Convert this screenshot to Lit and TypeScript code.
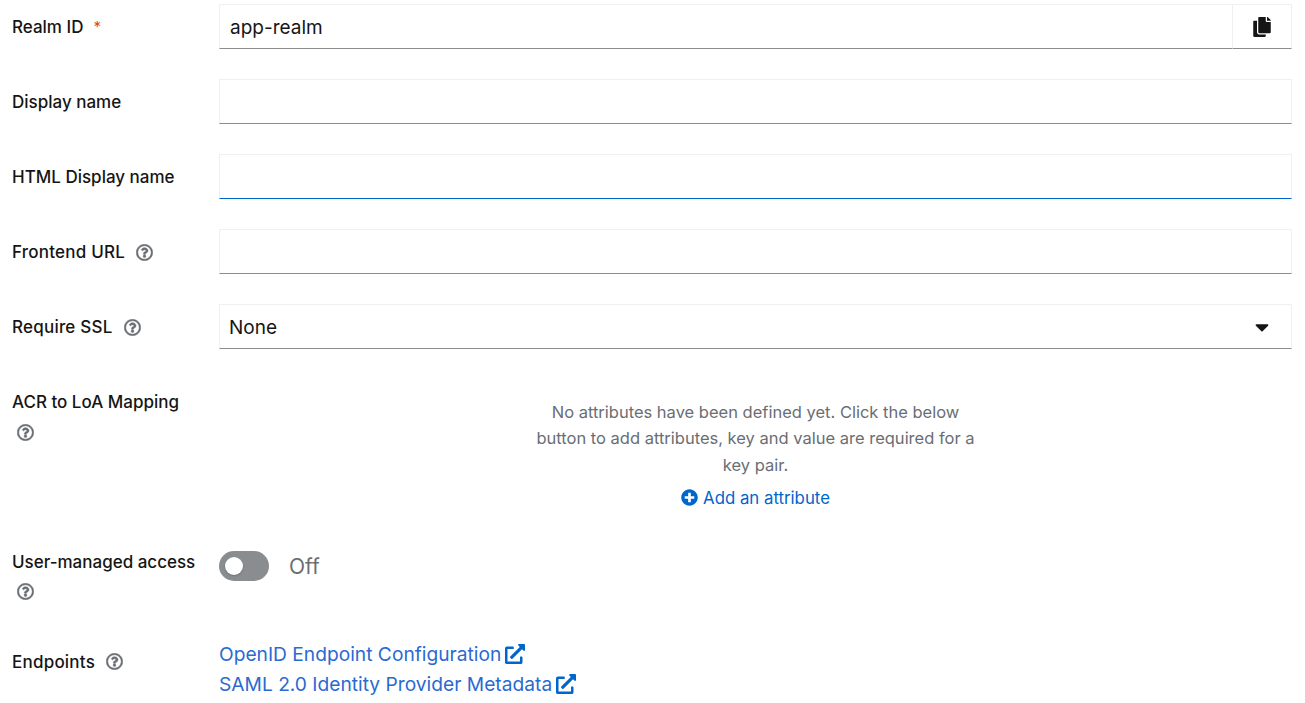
import { LitElement, html, css } from "lit";
import { customElement } from "lit/decorators.js";

const help = html`<svg class="help-icon" viewBox="0 0 512 512" aria-hidden="true"><path fill="currentColor" stroke="currentColor" stroke-width="14" d="M256 8C119.043 8 8 119.083 8 256c0 136.997 111.043 248 248 248s248-111.003 248-248C504 119.083 392.957 8 256 8zm0 448c-110.532 0-200-89.431-200-200 0-110.495 89.472-200 200-200 110.491 0 200 89.471 200 200 0 110.53-89.431 200-200 200zm107.244-255.2c0 67.052-72.421 68.084-72.421 92.863V300c0 6.627-5.373 12-12 12h-45.647c-6.627 0-12-5.373-12-12v-8.659c0-35.745 27.1-50.034 47.579-61.516 17.561-9.845 28.324-16.541 28.324-29.579 0-17.246-21.999-28.693-39.784-28.693-23.189 0-33.894 10.977-48.942 29.969-4.057 5.12-11.46 6.071-16.666 2.124l-27.824-21.098c-5.107-3.872-6.251-11.066-2.644-16.363C184.846 131.491 214.94 112 261.794 112c49.071 0 101.45 38.304 101.45 88.8zM298 368c0 23.159-18.841 42-42 42s-42-18.841-42-42 18.841-42 42-42 42 18.841 42 42z"/></svg>`;

const ext = html`<svg class="ext" viewBox="0 0 512 512" aria-hidden="true"><path fill="currentColor" d="M432,320H400a16,16,0,0,0-16,16V448H64V128H208a16,16,0,0,0,16-16V80a16,16,0,0,0-16-16H48A48,48,0,0,0,0,112V464a48,48,0,0,0,48,48H400a48,48,0,0,0,48-48V336A16,16,0,0,0,432,320ZM488,0h-128c-21.37,0-32.05,25.91-17,41l35.73,35.73L135,320.37a24,24,0,0,0,0,34L157.67,377a24,24,0,0,0,34,0L435.28,133.32,471,169c15,15,41,4.5,41-17V24A24,24,0,0,0,488,0Z"/></svg>`;

@customElement("app-root")
export class AppRoot extends LitElement {
  static styles = css`
    :host {
      display: block;
      box-sizing: border-box;
      padding: 4px 13px 0 12px;
      font-family: Inter, "Noto Sans", sans-serif;
      color: #151515;
      font-size: 16px;
    }
    * { box-sizing: border-box; }
    .form {
      display: grid;
      grid-template-columns: 207px 1073px;
      row-gap: 30px;
    }
    .label {
      display: flex;
      flex-wrap: wrap;
      align-items: center;
      align-content: flex-start;
      column-gap: 6px;
      row-gap: 6px;
      padding: 11px 12px 5px 0;
      font-size: 17px;
      font-weight: 500;
      line-height: 24px;
    }
    .spaced { letter-spacing: 0.22px; }
    .req {
      color: #d9491f;
      margin-left: 4px;
      padding-top: 2px;
      font-size: 15px;
      font-weight: 400;
      line-height: 20px;
      align-self: flex-start;
    }
    .help { display: flex; align-items: center; padding: 0 5px; height: 24px; color: #6a6e73; }
    .help-icon { width: 17px; height: 17px; display: block; }
    .input-group { display: flex; height: 45px; }
    .input {
      flex: 1;
      min-width: 0;
      height: 45px;
      border: 1px solid #f0f0f0;
      border-bottom-color: #8a8d90;
      padding: 2px 10px 0;
      font: inherit;
      font-size: 19px;
      color: #151515;
      background: #fff;
      outline: none;
      border-radius: 0;
    }
    .input.joined { border-right: 0; }
    .input.focused { border-bottom-color: #0066cc; }
    .copy {
      width: 60px;
      flex: none;
      border: 1px solid #f0f0f0;
      border-bottom-color: #8a8d90;
      background: #fff;
      display: flex;
      align-items: center;
      justify-content: center;
      padding: 0;
      color: #151515;
    }
    .copy svg { width: 18px; height: 20px; display: block; }
    .select {
      display: flex;
      align-items: center;
      justify-content: space-between;
      height: 45px;
      border: 1px solid #f0f0f0;
      border-bottom-color: #8a8d90;
      padding: 0 22px 0 9px;
      font-size: 19px;
    }
    .select span { padding-top: 2px; }
    .select svg { width: 14px; height: 22px; display: block; color: #151515; }
    .empty {
      padding-top: 20px;
      text-align: center;
      color: #6a6e73;
      font-size: 16.5px;
      line-height: 26.33px;
    }
    .add {
      display: flex;
      justify-content: center;
      align-items: center;
      gap: 5px;
      margin-top: 9px;
      color: #0066cc;
      line-height: 22px;
      font-size: 16.8px;
    }
    .add svg { width: 17px; height: 17px; display: block; }
    .toggle-wrap { display: flex; align-self: start; align-items: center; gap: 20px; padding-top: 12px; }
    .toggle {
      position: relative;
      width: 50px;
      height: 30px;
      border-radius: 15px;
      background: #8a8d90;
    }
    .knob {
      position: absolute;
      left: 6px;
      top: 6px;
      width: 18px;
      height: 18px;
      border-radius: 50%;
      background: #fff;
      box-shadow: 0 1px 2px rgba(0,0,0,.2);
    }
    .off { color: #6a6e73; font-size: 21px; padding-top: 2px; }
    .links { font-size: 19.2px; line-height: 30px; }
    .link { display: flex; align-items: center; gap: 4px; color: #2b6ad0; }
    .ext { width: 20px; height: 20px; display: block; color: #0066cc; }
  `;

  render() {
    return html`
      <div class="form">
        <div class="label"><span>Realm ID</span><span class="req">*</span></div>
        <div class="input-group">
          <input class="input joined" .value=${"app-realm"} readonly />
          <button class="copy" aria-label="Copy">
            <svg viewBox="0 0 448 512" aria-hidden="true"><path fill="currentColor" d="M320 448v40c0 13.255-10.745 24-24 24H24c-13.255 0-24-10.745-24-24V120c0-13.255 10.745-24 24-24h72v296c0 30.879 25.121 56 56 56h168zm0-344V0H152c-13.255 0-24 10.745-24 24v368c0 13.255 10.745 24 24 24h272c13.255 0 24-10.745 24-24V128H344c-13.2 0-24-10.8-24-24zm120.971-31.029L375.029 7.029A24 24 0 0 0 358.059 0H352v96h96v-6.059a24 24 0 0 0-7.029-16.97z"/></svg>
          </button>
        </div>

        <div class="label"><span>Display name</span></div>
        <div class="input-group"><input class="input" /></div>

        <div class="label"><span>HTML Display name</span></div>
        <div class="input-group"><input class="input focused" /></div>

        <div class="label"><span class="spaced">Frontend URL</span><span class="help">${help}</span></div>
        <div class="input-group"><input class="input" /></div>

        <div class="label"><span class="spaced">Require SSL</span><span class="help">${help}</span></div>
        <div class="select">
          <span>None</span>
          <svg viewBox="0 0 320 512" aria-hidden="true"><path fill="currentColor" d="M31.3 192h257.3c17.8 0 26.7 21.5 14.1 34.1L174.1 354.8c-7.8 7.8-20.5 7.8-28.3 0L17.2 226.1C4.6 213.5 13.5 192 31.3 192z"/></svg>
        </div>

        <div class="label"><span>ACR to LoA Mapping</span><span class="help">${help}</span></div>
        <div class="empty">
          No attributes have been defined yet. Click the below<br />
          button to add attributes, key and value are required for a<br />
          key pair.
          <div class="add">
            <svg viewBox="0 0 512 512" aria-hidden="true"><path fill="currentColor" d="M256 8C119 8 8 119 8 256s111 248 248 248 248-111 248-248S393 8 256 8zm144 276c0 6.6-5.4 12-12 12h-92v92c0 6.6-5.4 12-12 12h-56c-6.6 0-12-5.4-12-12v-92h-92c-6.6 0-12-5.4-12-12v-56c0-6.6 5.4-12 12-12h92v-92c0-6.6 5.4-12 12-12h56c6.6 0 12 5.4 12 12v92h92c6.6 0 12 5.4 12 12v56z"/></svg>
            <span>Add an attribute</span>
          </div>
        </div>

        <div class="label"><span>User-managed access</span><span class="help">${help}</span></div>
        <div class="toggle-wrap">
          <div class="toggle"><div class="knob"></div></div>
          <span class="off">Off</span>
        </div>

        <div class="label"><span class="spaced">Endpoints</span><span class="help">${help}</span></div>
        <div class="links">
          <div class="link"><span>OpenID Endpoint Configuration</span>${ext}</div>
          <div class="link"><span>SAML 2.0 Identity Provider Metadata</span>${ext}</div>
        </div>
      </div>
    `;
  }
}
